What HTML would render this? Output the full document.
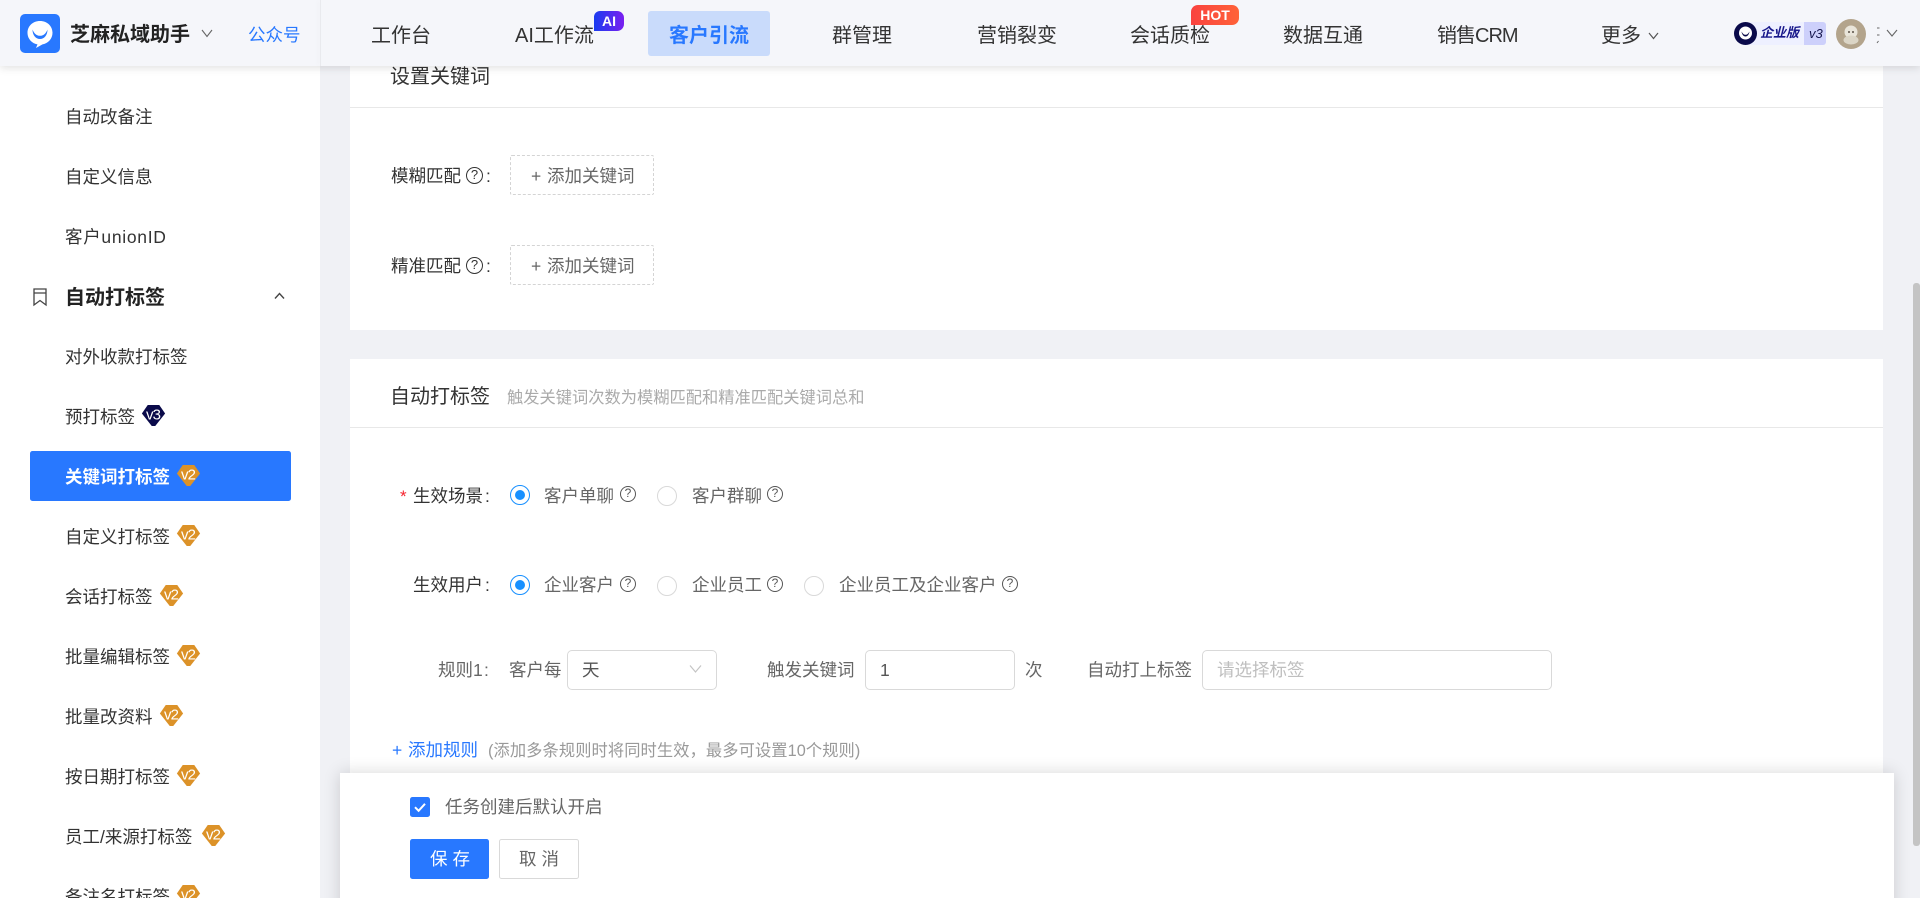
<!DOCTYPE html>
<html lang="zh-CN">
<head>
<meta charset="utf-8">
<title>关键词打标签</title>
<style>
html{margin:0;padding:0;background:#fff;overflow:hidden}
body{position:relative;margin:0;padding:0;width:1920px;height:898px;overflow:hidden;background:#f0f1f5;font-family:"Liberation Sans","Noto Sans CJK SC",sans-serif;color:#333}
*{box-sizing:border-box}
.t{position:absolute;white-space:nowrap;line-height:30px;height:30px;font-size:17.5px}
.b{position:absolute}
.nav{font-size:20px;color:#333}
.side{color:#333}
.lab{color:#333}
.gray{color:#666}
.g{position:absolute;width:23px;height:21px;overflow:visible}
.g text{font-family:"Liberation Sans",sans-serif;font-size:15px;fill:#fff}
.h{position:absolute;width:16px;height:16px;border:1.6px solid #555;border-radius:50%;color:#555;font-size:12px;line-height:13px;text-align:center}
.h.d{width:17px;height:17px;border-color:#333;color:#333;line-height:14px;font-size:13px;border-width:1.7px}
.r{position:absolute;width:20px;height:20px;border:1px solid #d9d9d9;border-radius:50%;background:#fff}
.r.on{border-color:#1890ff}
.r.on:after{content:"";position:absolute;left:4px;top:4px;width:10px;height:10px;border-radius:50%;background:#1890ff}
.dash{position:absolute;left:510px;width:144px;height:40px;border:1px dashed #d4d4d4;border-radius:2px;background:#fff}
.inp{position:absolute;height:40px;top:650px;border:1.25px solid #d9d9d9;border-radius:5px;background:#fff}
</style>
</head>
<body>

<!-- content cards -->
<div class="b" style="left:350px;top:0;width:1533px;height:330px;background:#fff"></div>
<div class="b" style="left:350px;top:107px;width:1533px;height:1px;background:#e8e8e8"></div>
<div class="b" style="left:350px;top:359px;width:1533px;height:420px;background:#fff"></div>
<div class="b" style="left:350px;top:427px;width:1533px;height:1px;background:#e8e8e8"></div>

<!-- scrollbar -->
<div class="b" style="left:1913px;top:283px;width:7px;height:563px;background:#c4c4c4;border-radius:3px"></div>

<!-- card 1 -->
<div class="t" style="left:390px;top:62px;font-size:20px;color:#333">设置关键词</div>
<div class="t lab" style="left:391px;top:161px">模糊匹配</div>
<span class="h d" style="left:466px;top:167px">?</span>
<div class="t lab" style="left:486px;top:161px">:</div>
<div class="dash" style="top:155px"></div>
<div class="t gray" style="left:531px;top:161px">+</div>
<div class="t gray" style="left:547px;top:161px">添加关键词</div>
<div class="t lab" style="left:391px;top:251px">精准匹配</div>
<span class="h d" style="left:466px;top:257px">?</span>
<div class="t lab" style="left:486px;top:251px">:</div>
<div class="dash" style="top:245px"></div>
<div class="t gray" style="left:531px;top:251px">+</div>
<div class="t gray" style="left:547px;top:251px">添加关键词</div>

<!-- card 2 -->
<div class="t" style="left:390px;top:382px;font-size:20px;color:#333">自动打标签</div>
<div class="t" style="left:507px;top:383px;font-size:16.25px;color:#aaa">触发关键词次数为模糊匹配和精准匹配关键词总和</div>

<div class="t" style="left:400px;top:482px;font-size:17px;color:#f5222d">*</div>
<div class="t lab" style="left:413px;top:481px">生效场景</div>
<div class="t lab" style="left:485px;top:481px">:</div>
<span class="r on" style="left:510px;top:485px"></span>
<div class="t gray" style="left:544px;top:481px">客户单聊</div>
<span class="h" style="left:620px;top:486px">?</span>
<span class="r" style="left:657px;top:486px"></span>
<div class="t gray" style="left:692px;top:481px">客户群聊</div>
<span class="h" style="left:767px;top:486px">?</span>

<div class="t lab" style="left:413px;top:570px">生效用户</div>
<div class="t lab" style="left:485px;top:570px">:</div>
<span class="r on" style="left:510px;top:575px"></span>
<div class="t gray" style="left:544px;top:570px">企业客户</div>
<span class="h" style="left:620px;top:576px">?</span>
<span class="r" style="left:657px;top:576px"></span>
<div class="t gray" style="left:692px;top:570px">企业员工</div>
<span class="h" style="left:767px;top:576px">?</span>
<span class="r" style="left:804px;top:576px"></span>
<div class="t gray" style="left:839px;top:570px">企业员工及企业客户</div>
<span class="h" style="left:1002px;top:576px">?</span>

<div class="t gray" style="left:438px;top:655px">规则1</div>
<div class="t gray" style="left:484px;top:655px">:</div>
<div class="t gray" style="left:509px;top:655px">客户每</div>
<div class="inp" style="left:567px;width:150px"></div>
<div class="t gray" style="left:582px;top:655px;color:#555">天</div>
<svg class="b" style="left:689px;top:664px" width="13" height="10" viewBox="0 0 13 10"><path d="M1 1.5L6.5 8L12 1.5" fill="none" stroke="#c4c4c4" stroke-width="1.2"/></svg>
<div class="t gray" style="left:767px;top:655px">触发关键词</div>
<div class="inp" style="left:865px;width:150px"></div>
<div class="t gray" style="left:880px;top:655px;color:#555">1</div>
<div class="t gray" style="left:1025px;top:655px">次</div>
<div class="t gray" style="left:1087px;top:655px">自动打上标签</div>
<div class="inp" style="left:1202px;width:350px"></div>
<div class="t" style="left:1217px;top:655px;color:#bfbfbf">请选择标签</div>

<div class="t" style="left:392px;top:735px;color:#2878ff">+</div>
<div class="t" style="left:408px;top:735px;color:#2878ff">添加规则</div>
<div class="t" style="left:488px;top:736px;font-size:16.25px;color:#999;letter-spacing:.09px">(添加多条规则时将同时生效，最多可设置10个规则)</div>

<!-- footer bar -->
<div class="b" style="left:340px;top:773px;width:1554px;height:160px;background:#fff;box-shadow:0 0 16px rgba(0,0,0,.16)"></div>
<div class="b" style="left:410px;top:797px;width:20px;height:20px;background:#2878ff;border-radius:2.5px"></div>
<svg class="b" style="left:410px;top:797px" width="20" height="20" viewBox="0 0 20 20"><path d="M5 10.2L8.6 13.8L15 6.8" fill="none" stroke="#fff" stroke-width="2"/></svg>
<div class="t gray" style="left:445px;top:792px">任务创建后默认开启</div>
<div class="b" style="left:410px;top:839px;width:79px;height:40px;background:#2878ff;border-radius:2.5px"></div>
<div class="t" style="left:430px;top:844px;color:#fff;letter-spacing:5px">保存</div>
<div class="b" style="left:499px;top:839px;width:80px;height:40px;background:#fff;border:1.25px solid #d9d9d9;border-radius:2.5px"></div>
<div class="t gray" style="left:519px;top:844px;letter-spacing:5px">取消</div>

<!-- sidebar -->
<div class="b" style="left:0;top:0;width:320px;height:940px;background:#fff"></div>
<div class="b" style="left:30px;top:451px;width:261px;height:50px;background:#2878ff;border-radius:2.5px"></div>

<div class="t side" style="left:65px;top:102px">自动改备注</div>
<div class="t side" style="left:65px;top:162px">自定义信息</div>
<div class="t side" style="left:65px;top:222px;letter-spacing:.7px">客户unionID</div>
<svg class="b" style="left:32px;top:287px" width="16" height="20" viewBox="0 0 16 20"><path d="M2 2H14V18L8 13.5L2 18ZM2 6H14" fill="none" stroke="#444" stroke-width="1.3"/></svg>
<div class="t side" style="left:65px;top:283px;font-size:20px;font-weight:700;color:#222">自动打标签</div>
<svg class="b" style="left:274px;top:292px" width="11" height="8" viewBox="0 0 11 8"><path d="M1 6.5L5.5 1.5L10 6.5" fill="none" stroke="#444" stroke-width="1.4"/></svg>
<div class="t side" style="left:65px;top:342px">对外收款打标签</div>
<div class="t side" style="left:65px;top:402px">预打标签</div>
<svg class="g" style="left:142px;top:405px" viewBox="0 0 23 21"><polygon points="6,.5 17,.5 22.5,8.5 13,20.5 10,20.5 .5,8.5" fill="#0a0a4a" stroke="#0a0a4a"/><text x="4" y="14.5" textLength="15">v3</text></svg>
<div class="t" style="left:65px;top:462px;color:#fff;font-weight:700">关键词打标签</div>
<svg class="g" style="left:177px;top:465px" viewBox="0 0 23 21"><polygon points="6,.5 17,.5 22.5,8.5 13,20.5 10,20.5 .5,8.5" fill="#dc9228" stroke="#dc9228"/><text x="4" y="14.5" textLength="15">v2</text></svg>
<div class="t side" style="left:65px;top:522px">自定义打标签</div>
<svg class="g" style="left:177px;top:525px" viewBox="0 0 23 21"><polygon points="6,.5 17,.5 22.5,8.5 13,20.5 10,20.5 .5,8.5" fill="#dc9228" stroke="#dc9228"/><text x="4" y="14.5" textLength="15">v2</text></svg>
<div class="t side" style="left:65px;top:582px">会话打标签</div>
<svg class="g" style="left:160px;top:585px" viewBox="0 0 23 21"><polygon points="6,.5 17,.5 22.5,8.5 13,20.5 10,20.5 .5,8.5" fill="#dc9228" stroke="#dc9228"/><text x="4" y="14.5" textLength="15">v2</text></svg>
<div class="t side" style="left:65px;top:642px">批量编辑标签</div>
<svg class="g" style="left:177px;top:645px" viewBox="0 0 23 21"><polygon points="6,.5 17,.5 22.5,8.5 13,20.5 10,20.5 .5,8.5" fill="#dc9228" stroke="#dc9228"/><text x="4" y="14.5" textLength="15">v2</text></svg>
<div class="t side" style="left:65px;top:702px">批量改资料</div>
<svg class="g" style="left:160px;top:705px" viewBox="0 0 23 21"><polygon points="6,.5 17,.5 22.5,8.5 13,20.5 10,20.5 .5,8.5" fill="#dc9228" stroke="#dc9228"/><text x="4" y="14.5" textLength="15">v2</text></svg>
<div class="t side" style="left:65px;top:762px">按日期打标签</div>
<svg class="g" style="left:177px;top:765px" viewBox="0 0 23 21"><polygon points="6,.5 17,.5 22.5,8.5 13,20.5 10,20.5 .5,8.5" fill="#dc9228" stroke="#dc9228"/><text x="4" y="14.5" textLength="15">v2</text></svg>
<div class="t side" style="left:65px;top:822px">员工/来源打标签</div>
<svg class="g" style="left:202px;top:825px" viewBox="0 0 23 21"><polygon points="6,.5 17,.5 22.5,8.5 13,20.5 10,20.5 .5,8.5" fill="#dc9228" stroke="#dc9228"/><text x="4" y="14.5" textLength="15">v2</text></svg>
<div class="t side" style="left:65px;top:882px">备注名打标签</div>
<svg class="g" style="left:177px;top:885px" viewBox="0 0 23 21"><polygon points="6,.5 17,.5 22.5,8.5 13,20.5 10,20.5 .5,8.5" fill="#dc9228" stroke="#dc9228"/><text x="4" y="14.5" textLength="15">v2</text></svg>

<!-- header -->
<div class="b" style="left:0;top:0;width:1920px;height:66px;background:#f5f6fa;box-shadow:0 2px 8px rgba(0,0,0,.12)"></div>
<div class="b" style="left:320px;top:0;width:1px;height:66px;background:#e9eaee;box-shadow:-2px 0 4px rgba(0,0,0,.05)"></div>

<svg class="b" style="left:20px;top:14px" width="40" height="39" viewBox="0 0 40 39">
<rect width="40" height="39" rx="5" fill="#2878ff"/>
<path d="M20 7C12.8 7 7.5 12.2 7.5 18.8C7.5 25 12.2 29.6 17.5 30.4L16 34L22.5 30.4C28 29.4 32.5 25 32.5 18.8C32.5 12.2 27.2 7 20 7Z" fill="#fff"/>
<path d="M12.5 15.5C12.5 21.5 16 25 20 25C24 25 27.5 21.5 27.5 15.5C26 19.5 23.5 21.8 20 21.8C16.5 21.8 14 19.5 12.5 15.5Z" fill="#2878ff"/>
</svg>
<div class="t" style="left:70px;top:20px;font-size:20px;font-weight:700;color:#222">芝麻私域助手</div>
<svg class="b" style="left:201px;top:29px" width="12" height="9" viewBox="0 0 12 9"><path d="M1 1L6 7.5L11 1" fill="none" stroke="#666" stroke-width="1.1"/></svg>
<div class="t" style="left:248px;top:20px;color:#2878ff">公众号</div>

<div class="t nav" style="left:371px;top:21px">工作台</div>
<div class="t nav" style="left:515px;top:21px">AI工作流</div>
<div class="b" style="left:594px;top:11px;width:30px;height:20px;border-radius:6px 7px 7px 0;background:linear-gradient(90deg,#1a3cf0,#7a1ff0);color:#fff;font-size:14px;font-weight:700;text-align:center;line-height:20px">AI</div>
<div class="b" style="left:648px;top:11px;width:122px;height:45px;background:#c9dbfb;border-radius:3px"></div>
<div class="t nav" style="left:669px;top:21px;color:#2878ff;font-weight:700">客户引流</div>
<div class="t nav" style="left:832px;top:21px">群管理</div>
<div class="t nav" style="left:977px;top:21px">营销裂变</div>
<div class="t nav" style="left:1130px;top:21px">会话质检</div>
<div class="b" style="left:1191px;top:5px;width:48px;height:20px;border-radius:7px 7px 7px 0;background:linear-gradient(90deg,#f9423f,#ff6238);color:#fff;font-size:14px;font-weight:700;text-align:center;line-height:20px">HOT</div>
<div class="t nav" style="left:1283px;top:21px">数据互通</div>
<div class="t nav" style="left:1437px;top:21px;letter-spacing:-1px">销售CRM</div>
<div class="t nav" style="left:1601px;top:21px">更多</div>
<svg class="b" style="left:1648px;top:32px" width="11" height="8" viewBox="0 0 11 8"><path d="M1 1L5.5 6.5L10 1" fill="none" stroke="#555" stroke-width="1.2"/></svg>

<!-- edition badge -->
<div class="b" style="left:1746px;top:22px;width:80px;height:23px;background:#eef0ff;border-radius:3px"></div>
<div class="b" style="left:1804px;top:22px;width:22px;height:23px;background:#cdd0fb;border-radius:0 3px 3px 0"></div>
<svg class="b" style="left:1734px;top:22px" width="24" height="23" viewBox="0 0 24 23"><circle cx="11.5" cy="11.5" r="11.5" fill="#0a0a4a"/><circle cx="11.5" cy="11" r="6.5" fill="#fff"/><path d="M7.5 9.5C8 13 10 14.5 11.5 14.5C13 14.5 15 13 15.5 9.5C14 12 13 12.8 11.5 12.8C10 12.8 9 12 7.5 9.5Z" fill="#0a0a4a"/></svg>
<div class="b" style="left:1760px;top:22px;height:23px;line-height:22px;font-size:13px;font-weight:700;font-style:italic;color:#17178a;white-space:nowrap">企业版</div>
<div class="b" style="left:1809px;top:22px;height:23px;line-height:23px;font-size:13px;font-style:italic;color:#17174f;white-space:nowrap">v3</div>

<!-- avatar -->
<svg class="b" style="left:1836px;top:19px" width="30" height="30" viewBox="0 0 30 30">
<circle cx="15" cy="15" r="15" fill="#b3a48c"/>
<circle cx="15" cy="13" r="6.5" fill="#e9e5da"/>
<ellipse cx="15" cy="21" rx="7.5" ry="4.5" fill="#dbd5c6"/>
<circle cx="13" cy="13" r="1" fill="#5a5046"/><circle cx="17" cy="13" r="1" fill="#5a5046"/>
</svg>
<svg class="b" style="left:1875px;top:26px" width="6" height="18" viewBox="0 0 6 18"><path d="M2 2H4.5M2 9H4.5M3.5 15L2 17" fill="none" stroke="#666" stroke-width="1"/></svg>
<svg class="b" style="left:1886px;top:29px" width="12" height="9" viewBox="0 0 12 9"><path d="M1 1L6 7L11 1" fill="none" stroke="#666" stroke-width="1.1"/></svg>

</body>
</html>
